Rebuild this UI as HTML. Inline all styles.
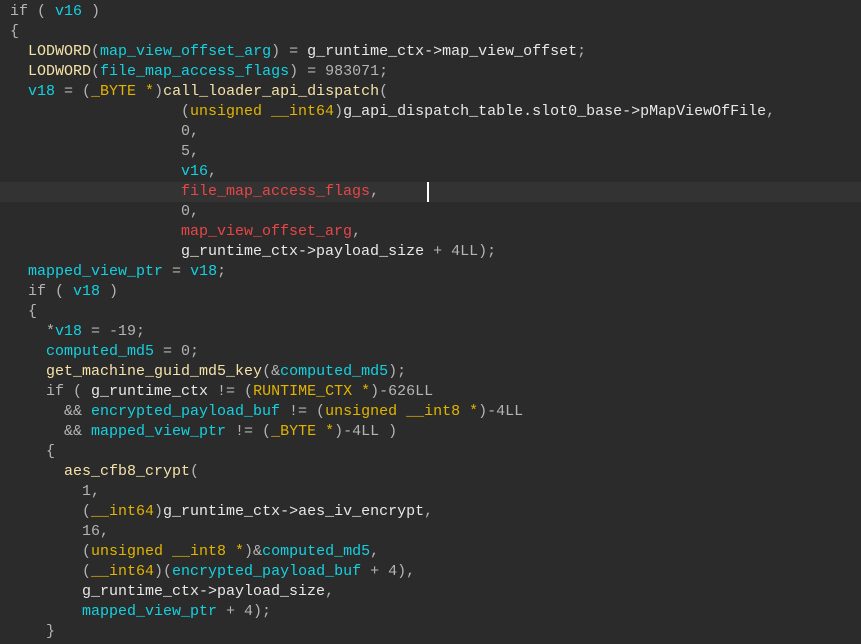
<!DOCTYPE html>
<html><head><meta charset="utf-8"><style>
body{margin:0;background:#2b2b2b;width:861px;height:644px;overflow:hidden}
pre{margin:0;padding:2px 0 0 10px;font:15px/20px "Liberation Mono",monospace;color:#b4b4b4;white-space:pre;overflow:hidden;width:851px}
.l{display:block;height:20px}
.hl{background:#333333;margin-left:-10px;padding-left:10px;position:relative}
.g{color:#e8e8e8}.f{color:#f5e2a8}.v{color:#12d2e2}.t{color:#e2b400}.r{color:#e84646}
.cur{position:absolute;left:427px;top:0;width:2px;height:20px;background:#fff}
</style></head><body><pre><span class="l">if ( <span class="v">v16</span> )</span><span class="l">{</span><span class="l">  <span class="f">LODWORD</span>(<span class="v">map_view_offset_arg</span>) = <span class="g">g_runtime_ctx-&gt;map_view_offset</span>;</span><span class="l">  <span class="f">LODWORD</span>(<span class="v">file_map_access_flags</span>) = 983071;</span><span class="l">  <span class="v">v18</span> = (<span class="t">_BYTE *</span>)<span class="f">call_loader_api_dispatch</span>(</span><span class="l">                   (<span class="t">unsigned __int64</span>)<span class="g">g_api_dispatch_table.slot0_base-&gt;pMapViewOfFile</span>,</span><span class="l">                   0,</span><span class="l">                   5,</span><span class="l">                   <span class="v">v16</span>,</span><span class="l hl">                   <span class="r">file_map_access_flags</span>,<span class="cur"></span></span><span class="l">                   0,</span><span class="l">                   <span class="r">map_view_offset_arg</span>,</span><span class="l">                   <span class="g">g_runtime_ctx-&gt;payload_size</span> + 4LL);</span><span class="l">  <span class="v">mapped_view_ptr</span> = <span class="v">v18</span>;</span><span class="l">  if ( <span class="v">v18</span> )</span><span class="l">  {</span><span class="l">    *<span class="v">v18</span> = -19;</span><span class="l">    <span class="v">computed_md5</span> = 0;</span><span class="l">    <span class="f">get_machine_guid_md5_key</span>(&amp;<span class="v">computed_md5</span>);</span><span class="l">    if ( <span class="g">g_runtime_ctx</span> != (<span class="t">RUNTIME_CTX *</span>)-626LL</span><span class="l">      &amp;&amp; <span class="v">encrypted_payload_buf</span> != (<span class="t">unsigned __int8 *</span>)-4LL</span><span class="l">      &amp;&amp; <span class="v">mapped_view_ptr</span> != (<span class="t">_BYTE *</span>)-4LL )</span><span class="l">    {</span><span class="l">      <span class="f">aes_cfb8_crypt</span>(</span><span class="l">        1,</span><span class="l">        (<span class="t">__int64</span>)<span class="g">g_runtime_ctx-&gt;aes_iv_encrypt</span>,</span><span class="l">        16,</span><span class="l">        (<span class="t">unsigned __int8 *</span>)&amp;<span class="v">computed_md5</span>,</span><span class="l">        (<span class="t">__int64</span>)(<span class="v">encrypted_payload_buf</span> + 4),</span><span class="l">        <span class="g">g_runtime_ctx-&gt;payload_size</span>,</span><span class="l">        <span class="v">mapped_view_ptr</span> + 4);</span><span class="l">    }</span></pre></body></html>
